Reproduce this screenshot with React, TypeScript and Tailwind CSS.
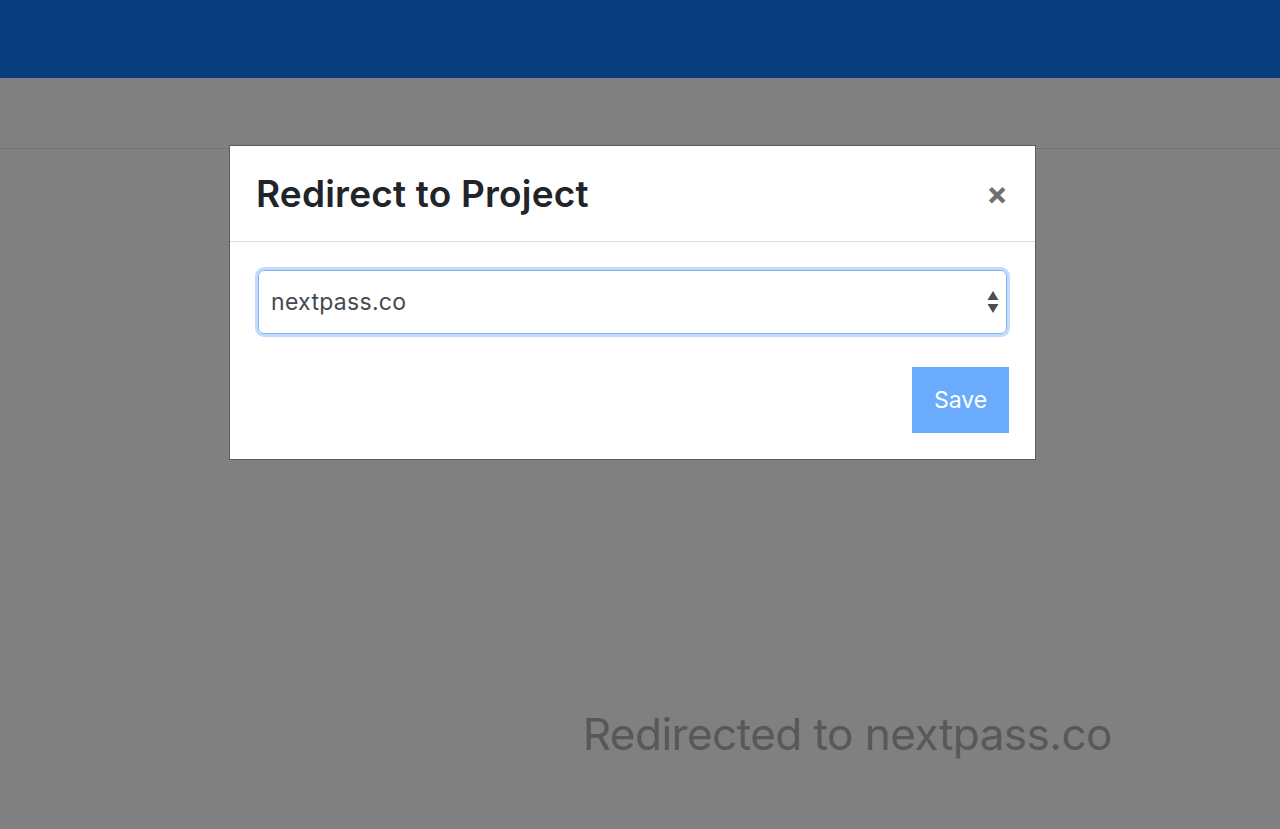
import { useState } from 'react';

const projects = ['nextpass.co', 'example.com'];

export default function App() {
  const [project] = useState(projects[0]);

  return (
    <div className="relative h-[829px] w-full overflow-hidden bg-[#808080]" style={{ fontFamily: 'Inter, Roboto, "Liberation Sans", sans-serif' }}>
      {/* Top bar */}
      <div className="h-[78px] bg-[#093d80]" />
      {/* Sub header */}
      <div className="h-[71px] border-b border-[#747474]" />

      {/* Page content under the overlay */}
      <div className="flex justify-end pr-[168px] pt-[563px]">
        <p className="text-[44px] leading-none tracking-[-0.5px] text-[#585858]">Redirected to {project}</p>
      </div>

      {/* Modal */}
      <div className="absolute left-[229px] top-[145px] w-[807px] border border-[#5c5c5c] bg-white">
        <div className="flex h-[96px] items-center justify-between border-b border-[#dcdcdc] pl-[26px] pr-[27px]">
          <h2 className="text-[37px] font-semibold tracking-[0.2px] text-[#212529]">Redirect to Project</h2>
          <button className="text-[32px] font-bold leading-none text-[#707070]">×</button>
        </div>
        <div className="p-[26px]">
          <div className="mx-[2px] mt-[2px] flex h-[64px] items-center justify-between rounded-[6px] border border-[#80b5f4] pl-[12px] pr-[7px] shadow-[0_0_0_3px_#c3dcfb]">
            <span className="text-[23px] tracking-[0.3px] text-[#444a50]">{project}</span>
            <svg width="12" height="26" viewBox="0 0 12 26">
              <path d="M6 2 L11.5 11 H0.5 Z" fill="#4a4f55" />
              <path d="M0.5 15 H11.5 L6 24 Z" fill="#4a4f55" />
            </svg>
          </div>
          <div className="mt-[33px] flex justify-end">
            <button className="h-[66px] w-[97px] bg-[#6aabfc] text-[23px] text-white">Save</button>
          </div>
        </div>
      </div>
    </div>
  );
}
